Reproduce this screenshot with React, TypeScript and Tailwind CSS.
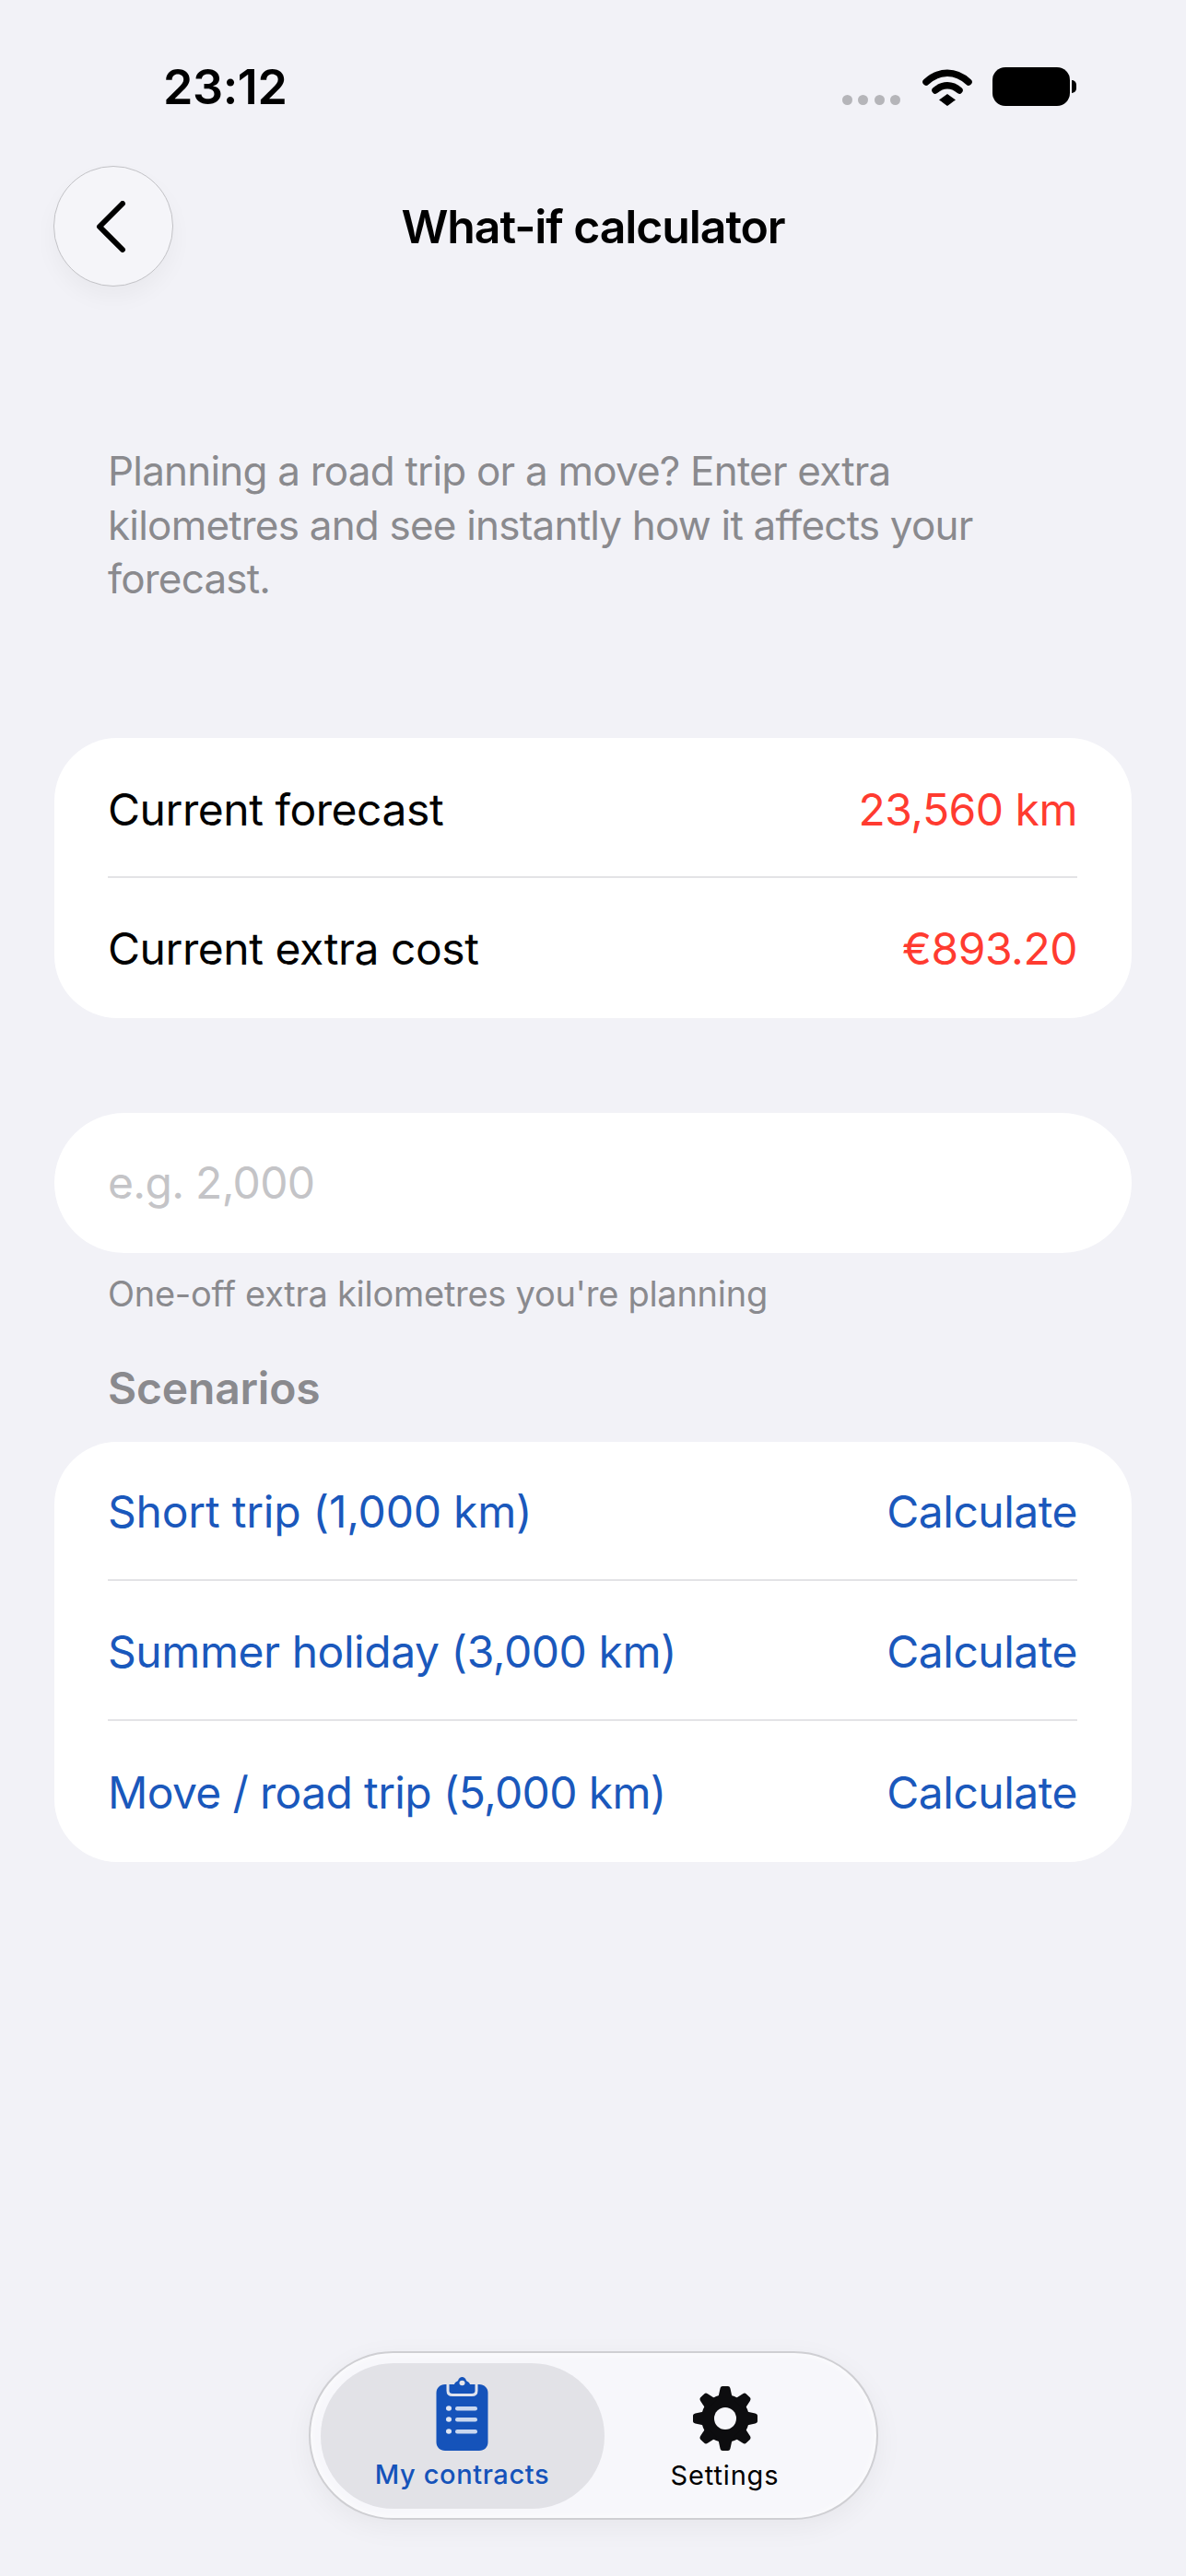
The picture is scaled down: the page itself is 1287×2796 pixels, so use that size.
const font = { fontFamily: "Inter, 'Noto Sans', sans-serif" };

function Row({ left, right, rowClass, leftClass, rightClass, divider }: { left: string; right: string; rowClass: string; leftClass: string; rightClass: string; divider?: boolean }) {
  return (
    <div className="ml-[58px] mr-[59px]">
      <div className={`flex items-center justify-between text-[48px] leading-[58px] ${rowClass}`}>
        <span className={leftClass}>{left}</span>
        <span className={rightClass}>{right}</span>
      </div>
      {divider && <div className="h-[2px] bg-[#e3e3e6]" />}
    </div>
  );
}

function Wifi() {
  return (
    <svg width="56" height="42" viewBox="0 0 56 42" fill="none">
      <path d="M5 16C19 3 37 3 51 16" stroke="#000" strokeWidth="7.5" strokeLinecap="round" />
      <path d="M15 25C23 18 33 18 41 25" stroke="#000" strokeWidth="7.5" strokeLinecap="round" />
      <path d="M28 29L37 35.5C33 38 31 40 28 42C25 40 23 38 19 35.5Z" fill="#000" />
    </svg>
  );
}

function Clipboard() {
  return (
    <svg width="57" height="80" viewBox="0 0 57 80">
      <path d="M10 8H47C52.5 8 56.5 12 56.5 17V71C56.5 76 52.5 80 47 80H10C4.5 80 0.5 76 0.5 71V17C0.5 12 4.5 8 10 8Z" fill="#1553ba" />
      <path d="M13 8V15C13 19 15.5 19.5 18 19.5H39C41.5 19.5 44 19 44 15V8" fill="#1553ba" stroke="#dfe3ee" strokeWidth="3" />
      <path d="M20 8C21 5 23 5 24 4C25 1 26.5 0 28.5 0C30.5 0 32 1 33 4C34 5 36 5 37 8C38 12 37 15 35 15H22C20 15 19 12 20 8Z" fill="#1553ba" />
      <ellipse cx="28.5" cy="6.5" rx="3" ry="2.8" fill="#e4e4e9" />
      <ellipse cx="14" cy="34" rx="3" ry="2.8" fill="#dfe5f3" />
      <ellipse cx="14" cy="46" rx="3" ry="2.8" fill="#dfe5f3" />
      <ellipse cx="14" cy="59" rx="3" ry="2.8" fill="#dfe5f3" />
      <rect x="21" y="32" width="24" height="4.5" rx="2.2" fill="#c9d7ef" />
      <rect x="21" y="44" width="24" height="4.5" rx="2.2" fill="#c9d7ef" />
      <rect x="21" y="57" width="24" height="4.5" rx="2.2" fill="#c9d7ef" />
    </svg>
  );
}

function Gear() {
  const teeth = [0, 45, 90, 135, 180, 225, 270, 315];
  return (
    <svg width="70" height="70" viewBox="0 0 70 70">
      <circle cx="35" cy="35" r="26" fill="#0d0d0f" />
      {teeth.map((a) => (
        <path key={a} d="M27 14L29.5 2.5C29.8 0.8 31 0 32 0H38C39 0 40.2 0.8 40.5 2.5L43 14Z" fill="#0d0d0f" transform={`rotate(${a} 35 35)`} />
      ))}
      <circle cx="35" cy="35" r="12" fill="#f7f7fb" />
    </svg>
  );
}

export default function App() {
  return (
    <div style={font} className="w-[1287px] h-[2796px] bg-[#f2f2f7] flex flex-col overflow-hidden text-black">
      <div className="h-[180px] relative flex items-start justify-between pt-[67px] pl-[177px] pr-[119px]">
        <span className="text-[52px] leading-[56px] font-semibold tracking-[-0.4px] text-black">23:12</span>
        <div className="flex items-start pt-[6px]">
          <div className="flex gap-[6.5px] mt-[30px] mr-[23px]">
            <span className="w-[11px] h-[11px] rounded-full bg-[#b5b5b9]" />
            <span className="w-[11px] h-[11px] rounded-full bg-[#b5b5b9]" />
            <span className="w-[11px] h-[11px] rounded-full bg-[#b5b5b9]" />
            <span className="w-[11px] h-[11px] rounded-full bg-[#b5b5b9]" />
          </div>
          <Wifi />
          <div className="flex items-center ml-[21px]">
            <div className="w-[84px] h-[42px] rounded-[14px] bg-black" />
            <div className="ml-[2px] w-[5px] h-[14px] rounded-r-full bg-black" />
          </div>
        </div>
      </div>

      <div className="h-[131px] relative flex items-center justify-center">
        <span className="text-[50px] leading-[60px] font-semibold tracking-[-1.1px]">What-if calculator</span>
        <div className="absolute left-[58px] top-0 w-[130px] h-[131px] rounded-full bg-[#f5f5f9] border-[1.5px] border-[#c2c2c6] shadow-[0_12px_24px_rgba(0,0,0,0.04)] flex items-center justify-center">
          <svg width="34" height="56" viewBox="0 0 34 56" fill="none" className="-ml-[7px]">
            <path d="M30 3L5 28L30 53" stroke="#000" strokeWidth="6" strokeLinecap="round" strokeLinejoin="round" />
          </svg>
        </div>
      </div>

      <p className="mt-[171px] ml-[117px] mr-[118px] text-[44px] leading-[58.5px] text-[#8a8a8e] tracking-[-0.8px]">
        Planning a road trip or a move? Enter extra kilometres and see instantly how it affects your forecast.
      </p>

      <div className="mt-[143.5px] mx-[59px] bg-white rounded-[68px]">
        <Row left="Current forecast" right="23,560 km" rowClass="h-[150px] pt-[6px]" leftClass="text-black tracking-[-0.45px]" rightClass="text-[#ff3b30] tracking-[-0.5px]" divider />
        <Row left="Current extra cost" right="€893.20" rowClass="h-[152px] pt-[2px]" leftClass="text-black tracking-[-0.45px]" rightClass="text-[#ff3b30] tracking-[-0.5px]" />
      </div>

      <div className="mt-[103px] mx-[59px] h-[152px] bg-white rounded-full flex items-center pl-[58px] text-[48px] text-[#c4c4c7] tracking-[-0.7px]">
        e.g. 2,000
      </div>

      <p className="mt-[19px] ml-[117px] text-[38px] leading-[50px] text-[#8a8a8e] tracking-[-0.27px]">One-off extra kilometres you're planning</p>

      <p className="mt-[49px] ml-[117px] text-[48px] leading-[58px] font-semibold text-[#8a8a8e] tracking-[-0.2px]">Scenarios</p>

      <div className="mt-[29px] mx-[59px] bg-white rounded-[68px]">
        <Row left="Short trip (1,000 km)" right="Calculate" rowClass="h-[149px] pt-[3px]" leftClass="text-[#1a58bc] tracking-[-0.22px]" rightClass="text-[#1a58bc] tracking-[-0.5px]" divider />
        <Row left="Summer holiday (3,000 km)" right="Calculate" rowClass="h-[150px] pt-[4px]" leftClass="text-[#1a58bc] tracking-[-0.45px]" rightClass="text-[#1a58bc] tracking-[-0.5px]" divider />
        <Row left="Move / road trip (5,000 km)" right="Calculate" rowClass="h-[153px] pt-[3px]" leftClass="text-[#1a58bc] tracking-[-0.65px]" rightClass="text-[#1a58bc] tracking-[-0.5px]" />
      </div>

      <div className="mt-auto mb-[61px] self-center w-[618px] h-[183px] rounded-full bg-[#f7f7fb] border-2 border-[#cfcfd3] shadow-[0_8px_30px_rgba(0,0,0,0.05),inset_0_0_8px_rgba(255,255,255,0.9)] flex items-center pl-[11px]">
        <div className="w-[308px] h-[158px] rounded-full bg-[#e2e2e7] flex flex-col items-center pt-[15px]">
          <Clipboard />
          <span className="mt-[8px] text-[29px] leading-[36px] font-medium text-[#1553ba] tracking-[0.6px]">My contracts</span>
        </div>
        <div className="w-[262px] flex flex-col items-center pt-[7px]">
          <Gear />
          <span className="mt-[9px] text-[29px] leading-[36px] font-normal text-black tracking-[0.85px]">Settings</span>
        </div>
      </div>
    </div>
  );
}
